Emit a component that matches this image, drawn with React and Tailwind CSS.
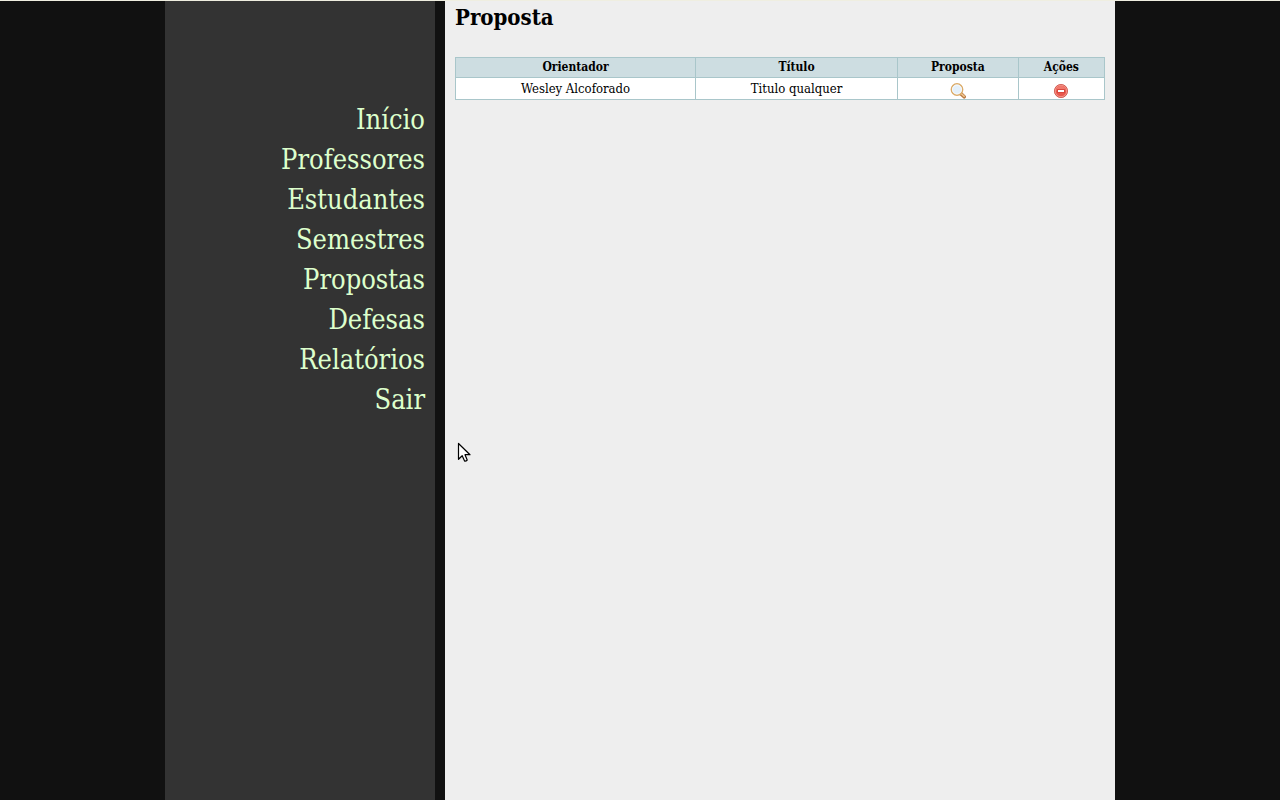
const links = [
  ['Início', '#inicio'],
  ['Professores', '#professores'],
  ['Estudantes', '#estudantes'],
  ['Semestres', '#semestres'],
  ['Propostas', '#propostas'],
  ['Defesas', '#defesas'],
  ['Relatórios', '#relatorios'],
  ['Sair', '#sair'],
];

const proposals = [{ advisor: 'Wesley Alcoforado', title: 'Titulo qualquer' }];

function MagnifierIcon() {
  return (
    <svg className="size-4" viewBox="0 0 16 16" aria-hidden="true">
      <path d="M10.8 10.6 14.2 13.8" stroke="#b87942" strokeWidth="3.6" strokeLinecap="round" />
      <path d="M11 10.3 14.2 13.3" stroke="#efc58e" strokeWidth="1.6" strokeLinecap="round" />
      <circle cx="7" cy="6.5" r="5.7" fill="#e4f0fa" stroke="#dcab68" strokeWidth="1.4" />
      <circle cx="7" cy="6.5" r="4.5" fill="none" stroke="#fafcff" strokeWidth="0.8" />
    </svg>
  );
}

function RemoveIcon() {
  return (
    <svg className="size-4" viewBox="0 0 16 16" aria-hidden="true">
      <circle cx="8" cy="8" r="6.6" fill="#e9574c" stroke="#cf5a50" strokeWidth="0.9" />
      <circle cx="8" cy="8" r="5.7" fill="none" stroke="#f4a49b" strokeWidth="0.8" />
      <path d="M3.2 7.5a4.8 4.8 0 0 1 9.6 0z" fill="#f0786c" />
      <rect x="4" y="6" width="8" height="4" rx="0.5" fill="#d9483e" />
      <rect x="5" y="7" width="6" height="2" fill="#fff" />
    </svg>
  );
}

function Pointer() {
  return (
    <svg className="pointer-events-none absolute left-3 top-[441px] h-5 w-[14px]" viewBox="0 0 14 20" aria-hidden="true">
      <path
        d="M1.5 1.5v15.8l3.7-3.6 2.4 5.4q1.6.2 2.6-1L8 12.7h5z"
        fill="#fff"
        stroke="#000"
        strokeWidth="1.2"
        strokeLinejoin="round"
      />
    </svg>
  );
}

const cell = 'border border-[#a9c6ca] p-0 text-center';

export default function App() {
  return (
    <div className="flex min-h-screen justify-center border-t border-[#efeee0] bg-[#111] font-['DejaVu_Serif_Condensed','DejaVu_Serif',serif] text-black">
      <div className="flex w-full max-w-[950px] gap-[10px]">
        <nav className="w-[270px] shrink-0 bg-[#333] px-[10px] pt-[99px]">
          <ul>
            {links.map(([label, href]) => (
              <li key={href} className="text-right text-[27px] leading-10">
                <a href={href} className="text-[#dfc] hover:underline">{label}</a>
              </li>
            ))}
          </ul>
        </nav>
        <main className="relative min-w-0 flex-1 bg-[#eee] px-[10px]">
          <h1 className="text-[22px] leading-8 font-bold">Proposta</h1>
          <table className="mt-6 w-full table-fixed border-collapse bg-white text-[13px]">
            <colgroup>
              <col className="w-[37%]" />
              <col className="w-[31.1%]" />
              <col className="w-[18.6%]" />
              <col className="w-[13.3%]" />
            </colgroup>
            <thead className="bg-[#cddde1] text-xs leading-[19px]">
              <tr>
                {['Orientador', 'Título', 'Proposta', 'Ações'].map((heading) => (
                  <th key={heading} scope="col" className={cell}>{heading}</th>
                ))}
              </tr>
            </thead>
            <tbody className="leading-[21px]">
              {proposals.map(({ advisor, title }) => (
                <tr key={advisor}>
                  <td className={cell}>{advisor}</td>
                  <td className={cell}>{title}</td>
                  <td className={cell}>
                    <a href="#proposta" aria-label="Ver proposta" className="flex justify-center pt-1">
                      <MagnifierIcon />
                    </a>
                  </td>
                  <td className={cell}>
                    <button type="button" aria-label="Remover proposta" className="mx-auto flex cursor-pointer pt-1">
                      <RemoveIcon />
                    </button>
                  </td>
                </tr>
              ))}
            </tbody>
          </table>
          <Pointer />
        </main>
      </div>
    </div>
  );
}
